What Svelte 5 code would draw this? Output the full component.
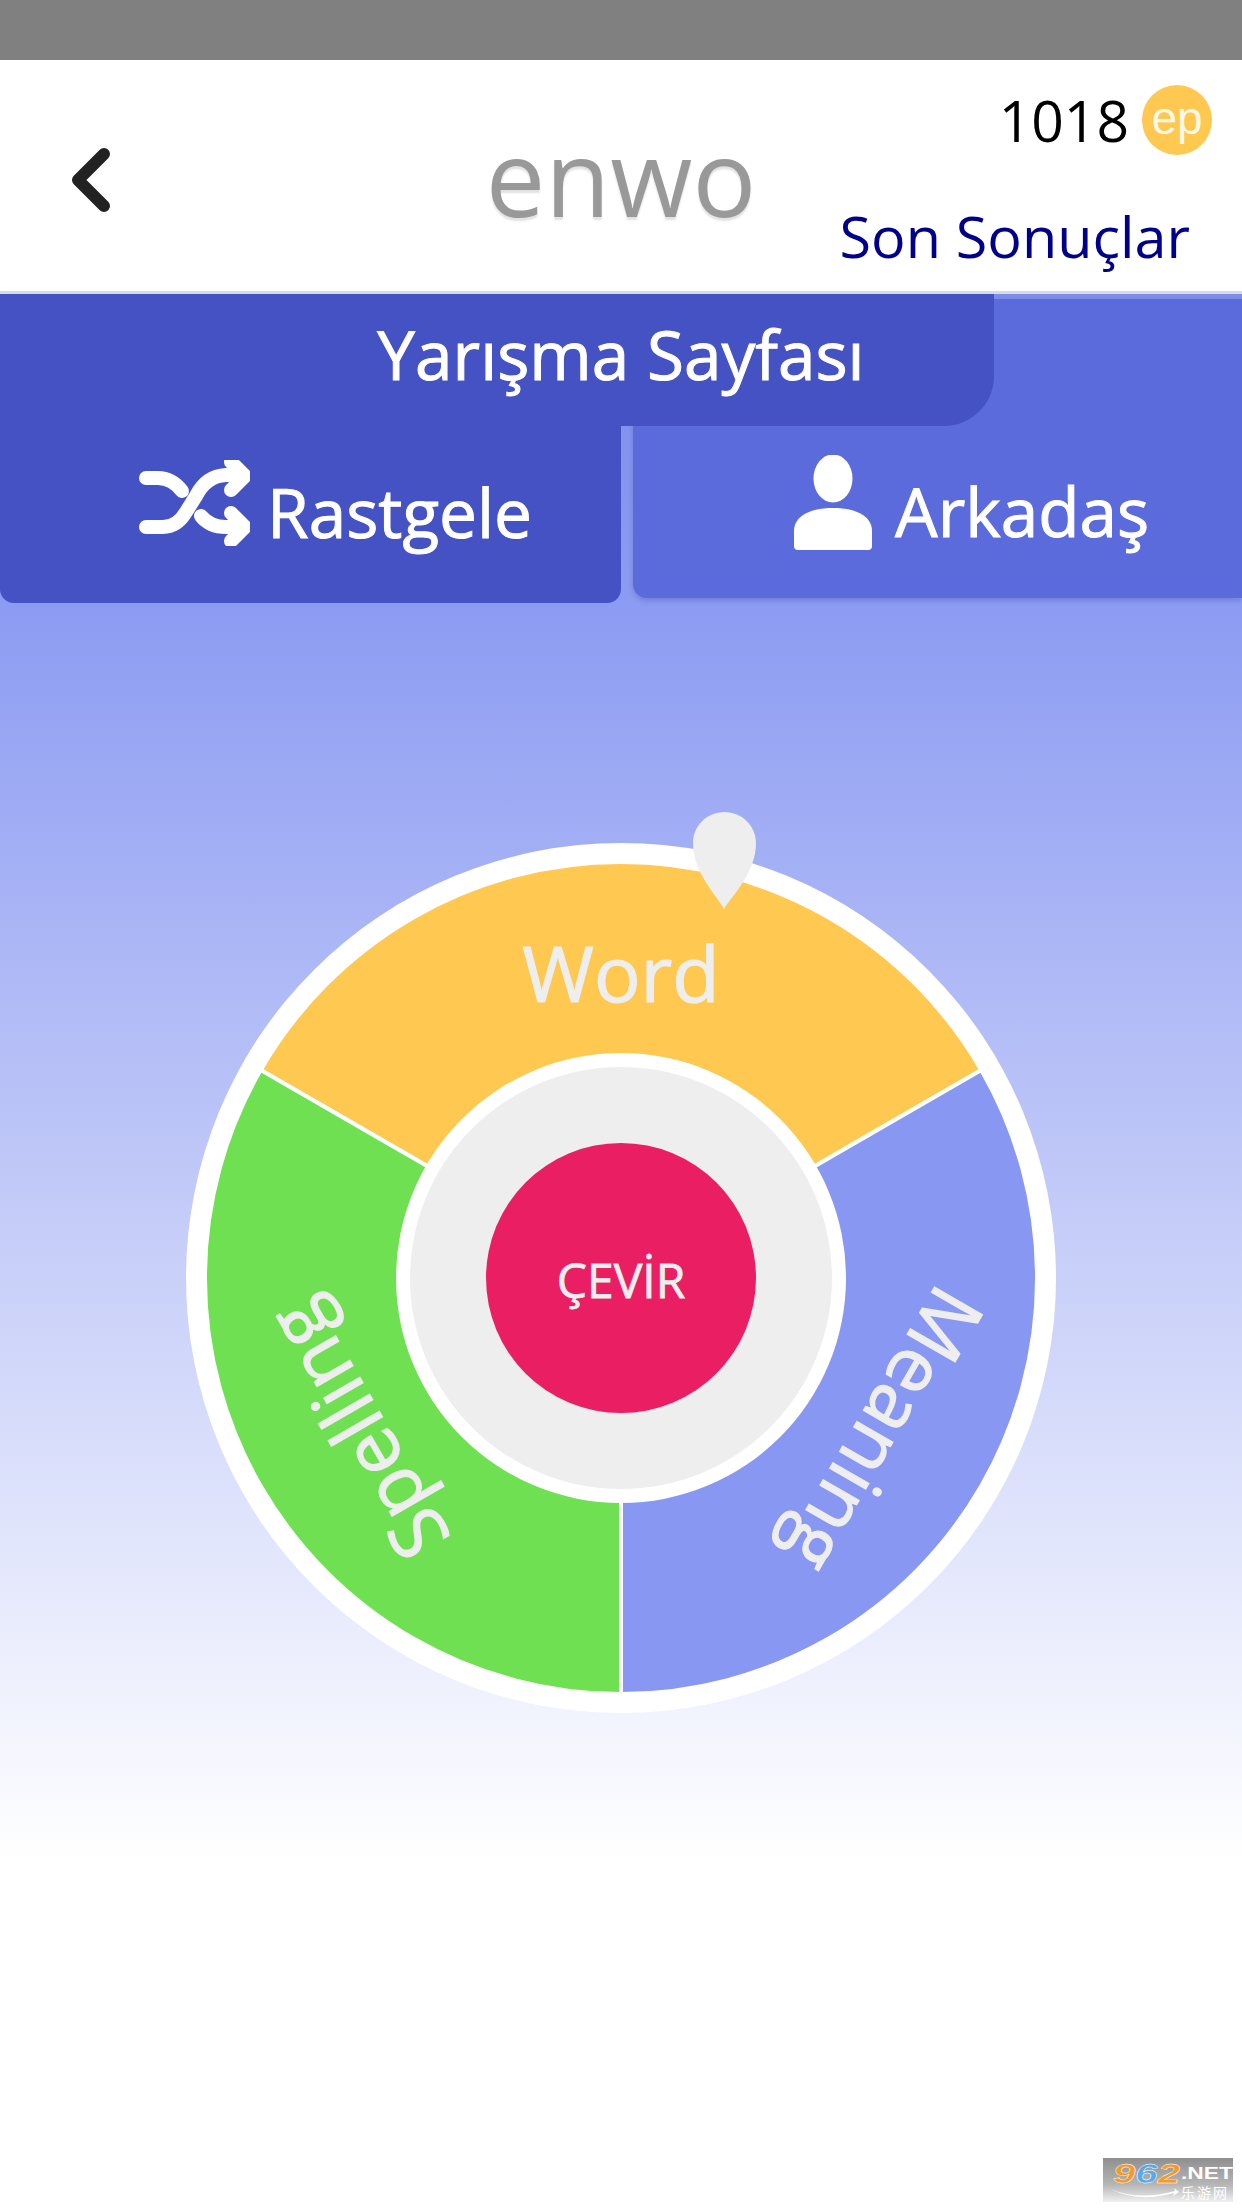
<script>
  const sectors = [
    { d: 'M0 0L-360.3 -208A416 416 0 0 1 360.3 -208Z', fill: '#ffc850', label: 'Word', angle: 0 },
    { d: 'M0 0L360.3 -208A416 416 0 0 1 0 416Z', fill: '#8897f2', label: 'Meaning', angle: 120 },
    { d: 'M0 0L0 416A416 416 0 0 1 -360.3 -208Z', fill: '#6ee051', label: 'Spelling', angle: 240 }
  ];
</script>

<div class="page">
  <div class="status"></div>

  <header class="header">
    <svg class="back" width="60" height="80" viewBox="0 0 60 80" aria-label="Geri">
      <path d="M44 9 L18 35 L44 61" />
    </svg>
    <div class="title">enwo</div>
    <div class="side">
      <div class="score">
        <span class="points">1018</span>
        <span class="coin">ep</span>
      </div>
      <div class="results">Son Sonuçlar</div>
    </div>
  </header>

  <main class="main">
    <div class="banner">Yarışma Sayfası</div>
    <div class="tabs">
      <div class="tab active">
        <svg class="shuffle" width="111" height="86" viewBox="139 460 111 86">
          <path d="M146 478H158Q172 478 182 491" />
          <path d="M146 527H163Q177 527 186 512L196 496Q206 476 226 475H243" />
          <path d="M201 516Q210 527 226 527H243" />
          <path d="M231 462L245 476L231 490" />
          <path d="M231 513L245 527L231 541" />
        </svg>
        <span>Rastgele</span>
      </div>
      <div class="tab other">
        <svg class="person" width="78" height="96" viewBox="794 455 78 96">
          <ellipse cx="833" cy="478.500" rx="19.500" ry="24" />
          <path d="M794 531C794 515 812 508 833 508C854 508 872 515 872 531V546Q872 550 868 550H798Q794 550 794 546Z" />
        </svg>
        <span>Arkadaş</span>
      </div>
    </div>

    <svg class="wheel" width="870" height="901" viewBox="-435 -466 870 901">
      <circle r="435" fill="#fff" />
      {#each sectors as s}
        <path d={s.d} fill={s.fill} stroke="#fff" stroke-width="4" />
      {/each}
      {#each sectors as s}
        <text class="label" transform="rotate({s.angle})" y="-276" text-anchor="middle">{s.label}</text>
      {/each}
      <circle r="225" fill="#fff" />
      <circle r="211" fill="#eeeeee" />
      <circle r="135" fill="#ea1f63" />
      <text class="spin" y="20" text-anchor="middle">ÇEVİR</text>
      <path d="M103 -369C97 -381 72 -405 72 -435C72 -452 86 -466 103.500 -466C121 -466 135 -452 135 -435C135 -405 110 -381 103 -369Z" fill="#eeeeee" />
    </svg>

    <svg class="logo" width="130" height="44" viewBox="0 0 130 44">
      <defs>
        <linearGradient id="logoBg" x1="0" y1="0" x2="0" y2="1">
          <stop offset="0" stop-color="#8f8f8f" />
          <stop offset="0.6" stop-color="#b5b5b5" />
          <stop offset="1" stop-color="#f0f0f0" />
        </linearGradient>
      </defs>
      <rect width="130" height="44" fill="url(#logoBg)" />
      <text class="num" x="10" y="25" textLength="67" lengthAdjust="spacingAndGlyphs"><tspan fill="#f29a2e">9</tspan><tspan fill="#5aa9e6">6</tspan><tspan fill="#f29a2e">2</tspan></text>
      <text class="net" x="78" y="21" textLength="52" lengthAdjust="spacingAndGlyphs">.NET</text>
      <text class="cn" x="78" y="40">乐游网</text>
      <path d="M7 31Q36 43 72 33L71 30L76 34L70 38L71 35Q36 45 7 31Z" fill="#fff" />
    </svg>
  </main>
</div>

<style>
  :global(body) {
    margin: 0;
    background: #fff;
  }

  .page {
    width: 1242px;
    height: 2208px;
    display: flex;
    flex-direction: column;
    overflow: hidden;
    font-family: 'Open Sans', 'Noto Sans', sans-serif;
  }

  .status {
    height: 60px;
    flex: none;
    background: #808080;
  }

  .header {
    height: 231px;
    flex: none;
    display: grid;
    grid-template-columns: 1fr auto 1fr;
    background: #fff;
    border-bottom: 3px solid #d5dce8;
  }

  .back {
    margin: 85px 0 0 60px;
    fill: none;
    stroke: #222;
    stroke-width: 12;
    stroke-linecap: round;
    stroke-linejoin: round;
  }

  .title {
    margin-top: 56px;
    font-size: 106px;
    line-height: 120px;
    color: #999;
    text-shadow: 0 3px 2px #e2e2e2;
  }

  .side {
    display: flex;
    flex-direction: column;
    align-items: flex-end;
    padding: 25px 30px 0 0;
  }

  .score {
    display: flex;
    align-items: center;
    gap: 13px;
    height: 70px;
  }

  .points {
    font-size: 57px;
    line-height: 70px;
    color: #000;
  }

  .coin {
    width: 70px;
    height: 70px;
    border-radius: 50%;
    background: #ffc850;
    color: #fff8e8;
    display: flex;
    align-items: center;
    justify-content: center;
    font-family: 'Liberation Sans', sans-serif;
    font-size: 46px;
    line-height: 1;
    padding-bottom: 4px;
    box-sizing: border-box;
  }

  .results {
    margin: 46px 22px 0 0;
    font-size: 57.500px;
    line-height: 70px;
    color: #00008b;
    white-space: nowrap;
  }

  .main {
    position: relative;
    flex: 1;
    background: linear-gradient(#7c8dea 0, #8c9bf2 16%, #fff 82%);
  }

  .banner {
    position: relative;
    z-index: 1;
    width: 994px;
    height: 132px;
    margin-bottom: -132px;
    box-sizing: border-box;
    padding-left: 248px;
    text-align: center;
    font-size: 67.500px;
    -webkit-text-stroke: 1px #fff;
    line-height: 120px;
    color: #fff;
    background: #4552c3;
    border-radius: 12px 0 50px 0;
  }

  .tabs {
    display: grid;
    grid-template-columns: 621px 609px;
    column-gap: 12px;
    align-items: start;
  }

  .tab {
    box-sizing: border-box;
    display: flex;
    align-items: center;
    color: #fff;
    font-size: 67.500px;
    -webkit-text-stroke: 1px #fff;
    line-height: 90px;
  }

  .active {
    height: 309px;
    padding: 132px 0 0 139px;
    gap: 17px;
    background: #4552c3;
    border-radius: 0 0 14px 14px;
  }

  .active span {
    margin-top: -5px;
  }

  .other {
    height: 299px;
    margin-top: 5px;
    padding: 127px 0 0 161px;
    gap: 23px;
    background: #5c6bdc;
    border-radius: 0 0 0 14px;
    box-shadow: 0 3px 5px rgba(60, 70, 170, 0.3);
  }

  .other span {
    margin-top: -2px;
  }

  .shuffle {
    flex: none;
    margin-top: -23px;
    fill: none;
    stroke: #fff;
    stroke-width: 14;
    stroke-linecap: round;
    stroke-linejoin: round;
  }

  .person {
    flex: none;
    margin-top: -18px;
    fill: #fff;
  }

  .wheel {
    display: block;
    margin: 209px auto 0;
  }

  .label {
    font-size: 77.500px;
    fill: #eeeeee;
    stroke: #eeeeee;
    stroke-width: 1.2;
  }

  .spin {
    font-size: 48px;
    fill: #eeeeee;
    stroke: #eeeeee;
    stroke-width: 0.8;
  }

  .logo {
    position: absolute;
    right: 9px;
    bottom: 6px;
    overflow: visible;
  }

  .num {
    font-family: 'Liberation Sans', sans-serif;
    font-weight: 700;
    font-style: italic;
    font-size: 27px;
    stroke: #fff;
    stroke-width: 0.4;
  }

  .net {
    font-family: 'Liberation Sans', sans-serif;
    font-weight: 700;
    font-size: 16px;
    fill: #fff;
  }

  .cn {
    font-family: 'Noto Sans CJK SC', sans-serif;
    font-size: 14px;
    letter-spacing: 2px;
    fill: #fff;
  }
</style>
